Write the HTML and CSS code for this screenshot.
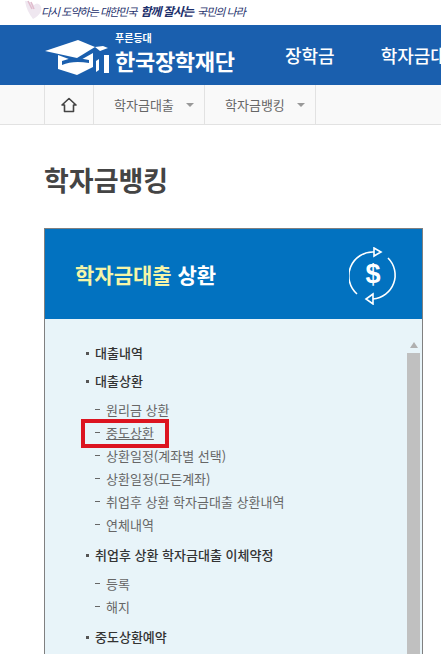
FILE: index.html
```html
<!DOCTYPE html>
<html lang="ko">

<head>
    <meta charset="UTF-8">
    <meta name="viewport" content="width=device-width, initial-scale=1.0">
    <title>학자금뱅킹</title>
    <link rel="stylesheet" href="styles.css">
</head>

<body>
    <div class="slogan">
        <svg class="slogan-mark" width="20" height="20" viewBox="0 0 20 20">
            <path d="M1 1 C5 1 8 3 10 5 C12 3 14 3 16 5 C20 10 15 16 9 19 C5 14 2 8 1 1Z" fill="#efe7f0" />
            <path d="M4 1 L8 9 M7 2 L10 9" stroke="#e0bccd" stroke-width="1.5" fill="none" />
        </svg>
        <p class="slogan-text">다시 도약하는 대한민국 <b>함께 잘사는</b> 국민의 나라</p>
    </div>

    <header class="top">
        <a class="logo">
            <svg class="logo-mark" width="66" height="38" viewBox="0 0 66 38">
                <path d="M0 12 L33 1 L50 8 L32 19 Z" fill="#fff" />
                <path d="M13 16 L32 23 L48 14 L48 28 L32 36 L13 30 Z" fill="#fff" />
                <path d="M17 22 Q28 17 44 21 L44 24 Q28 21 17 26 Z" fill="#1a5fae" />
                <path d="M50 8 L58 7 L63 9 L55 12 Z" fill="#fff" />
                <path d="M51 22 L54 20 L54 31 L51 33 Z" fill="#fff" />
                <rect x="59" y="16" width="5" height="18" fill="#fff" />
            </svg>
            <span class="logo-text">
                <small>푸른등대</small>
                <strong>한국장학재단</strong>
            </span>
        </a>
        <nav class="top-nav">
            <a>장학금</a>
            <a>학자금대출</a>
        </nav>
    </header>

    <div class="crumbs">
        <div class="crumb-row">
            <a class="crumb crumb-home">
                <svg width="16" height="16" viewBox="0 0 16 16">
                    <path d="M1 8 L8 1.5 L15 8 H12.5 V14.5 H3.5 V8 Z" fill="none" stroke="#444" stroke-width="1.6" stroke-linejoin="round" />
                </svg>
            </a>
            <a class="crumb">학자금대출<i class="caret"></i></a>
            <a class="crumb">학자금뱅킹<i class="caret"></i></a>
        </div>
    </div>

    <main class="page">
        <h1 class="page-title">학자금뱅킹</h1>

        <section class="box">
            <div class="box-head">
                <h2><em>학자금대출</em> 상환</h2>
                <svg class="box-icon" width="50" height="58" viewBox="0 0 50 58">
                    <g fill="none" stroke="#fff" stroke-width="1.6">
                        <path d="M25 5 A24 24 0 0 0 8 47" />
                        <path d="M39 11 A24 24 0 0 1 24 52" />
                        <path d="M25 1 L32 5 L25 9 Z" />
                        <path d="M24 47 L17 52 L24 57 Z" />
                    </g>
                    <text class="box-icon-sign" x="24" y="36" text-anchor="middle">$</text>
                </svg>
            </div>
            <div class="box-body">
                <ul class="menu">
                    <li class="menu-item">대출내역</li>
                    <li class="menu-item">대출상환
                        <ul class="sub">
                            <li>원리금 상환</li>
                            <li class="is-marked"><u>중도상환</u></li>
                            <li>상환일정(계좌별 선택)</li>
                            <li>상환일정(모든계좌)</li>
                            <li>취업후 상환 학자금대출 상환내역</li>
                            <li>연체내역</li>
                        </ul>
                    </li>
                    <li class="menu-item">취업후 상환 학자금대출 이체약정
                        <ul class="sub">
                            <li>등록</li>
                            <li>해지</li>
                        </ul>
                    </li>
                    <li class="menu-item">중도상환예약</li>
                </ul>
                <div class="scrollbar">
                    <span class="scroll-up"></span>
                    <span class="scroll-thumb"></span>
                </div>
            </div>
        </section>
    </main>
</body>

</html>
```

FILE: styles.css
```css
*,
*::before,
*::after {
    margin: 0;
    padding: 0;
    box-sizing: border-box;
}

body {
    width: 441px;
    height: 654px;
    overflow: hidden;
    background-color: #fff;
    font-family: "Noto Sans CJK KR", "Noto Sans", sans-serif;
}

ul {
    list-style: none;
}

.slogan {
    display: flex;
    align-items: center;
    height: 25px;
    padding: 0 0 5px 24px;
}

.slogan-mark {
    margin-right: -3px;
}

.slogan-text {
    color: #1c2f6b;
    font-size: 11px;
    font-style: italic;
    letter-spacing: -1px;
    white-space: nowrap;
}

.slogan-text b {
    margin: 0 2px;
    font-size: 12px;
}

.top {
    display: flex;
    align-items: center;
    height: 60px;
    padding-left: 45px;
    overflow: hidden;
    background-color: #1a5fae;
    white-space: nowrap;
}

.logo {
    display: flex;
    flex: none;
    align-items: center;
    width: 240px;
    color: #fff;
}

.logo-mark {
    margin-top: 5px;
    margin-right: 4px;
}

.logo-text {
    display: flex;
    flex-direction: column;
    margin-top: -6px;
}

.logo-text small {
    margin-bottom: 4px;
    font-size: 10px;
    font-weight: 700;
    line-height: 12px;
}

.logo-text strong {
    font-size: 22px;
    font-weight: 700;
    letter-spacing: -0.3px;
    line-height: 24px;
}

.top-nav {
    display: flex;
    gap: 46px;
    color: #fff;
    font-size: 18px;
    font-weight: 500;
}

.crumbs {
    height: 40px;
    padding-left: 44px;
    background-color: #f9f9f9;
    border-bottom: 1px solid #e2e2e2;
}

.crumb-row {
    display: flex;
    height: 39px;
    border-left: 1px solid #e2e2e2;
}

.crumb {
    display: flex;
    align-items: center;
    width: 111px;
    padding-left: 20px;
    border-right: 1px solid #e2e2e2;
    color: #666;
    font-size: 13px;
}

.crumb-home {
    justify-content: center;
    width: 49px;
    padding-left: 0;
}

.caret {
    margin-left: 12px;
    border-top: 4px solid #999;
    border-left: 4px solid transparent;
    border-right: 4px solid transparent;
}

.page {
    padding: 36px 18px 0 44px;
}

.page-title {
    height: 67px;
    color: #444;
    font-size: 27px;
    font-weight: 700;
    line-height: 38px;
}

.box {
    border: 1px solid #808080;
    border-bottom: 0;
}

.box-head {
    display: flex;
    justify-content: space-between;
    align-items: center;
    height: 90px;
    padding: 0 23px 0 30px;
    background-color: #0272c0;
}

.box-head h2 {
    color: #fff;
    font-size: 21px;
    font-weight: 700;
}

.box-head em {
    color: #f5f5a8;
    font-style: normal;
}

.box-icon {
    margin-top: 4px;
}

.box-icon-sign {
    fill: #fff;
    font-family: "Liberation Sans", sans-serif;
    font-size: 27px;
    font-weight: 700;
}

.box-body {
    display: flex;
    justify-content: space-between;
    height: 340px;
    padding: 25px 2px 0 41px;
    background-color: #e8f4f9;
}

.menu-item {
    position: relative;
    margin-bottom: 10px;
    padding-left: 9px;
    color: #333;
    font-size: 13px;
    font-weight: 500;
    line-height: 18px;
}

.menu-item::before {
    content: "";
    position: absolute;
    top: 8px;
    left: 0;
    width: 3px;
    height: 3px;
    background-color: #555;
}

.sub {
    margin-top: 8px;
    margin-bottom: 7px;
    color: #666;
    font-weight: 400;
}

.sub li {
    position: relative;
    height: 23px;
    padding-left: 11px;
    line-height: 23px;
    white-space: nowrap;
}

.sub li::before {
    content: "";
    position: absolute;
    top: 11px;
    left: 0;
    width: 5px;
    height: 1px;
    background-color: #666;
}

.sub .is-marked::after {
    content: "";
    position: absolute;
    top: -2px;
    left: -14px;
    width: 88px;
    height: 29px;
    border: 4px solid #dc1420;
}

.scrollbar {
    display: flex;
    flex-direction: column;
    align-items: center;
    flex: none;
    width: 13px;
    margin-top: -8px;
}

.scroll-up {
    flex: none;
    margin: 6px 0 5px;
    border-bottom: 6px solid #b0b0b0;
    border-left: 4px solid transparent;
    border-right: 4px solid transparent;
}

.scroll-thumb {
    flex: 1;
    width: 13px;
    background-color: #c0c0c0;
}
```
